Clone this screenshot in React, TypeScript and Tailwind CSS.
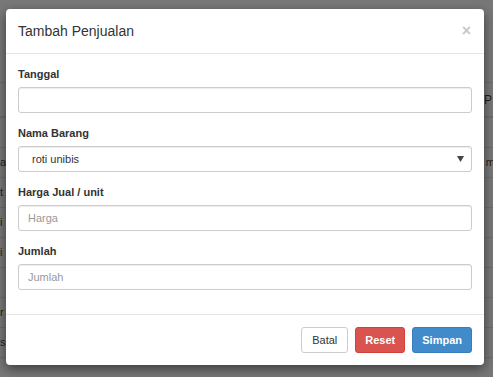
import React from 'react';

const rows = [
  { left: '', right: '' },
  { left: 'a', right: 'm' },
  { left: 't', right: '' },
  { left: 'i', right: '' },
  { left: 'i', right: '' },
  { left: '', right: '' },
  { left: 'r', right: '' },
  { left: 's', right: '' },
];

function Field({ label, children }: { label: string; children: React.ReactNode }) {
  return (
    <div className="mb-3">
      <label className="block h-4 mb-[5px] text-[11px] leading-4 font-bold text-[#333]">{label}</label>
      {children}
    </div>
  );
}

const inputCls =
  'w-full h-[26px] px-[9px] text-[11px] text-[#555] bg-white border border-[#ccc] rounded-[3px] shadow-[inset_0_1px_1px_rgba(0,0,0,0.075)] outline-none placeholder:text-[#999]';

export default function App() {
  return (
    <div className="relative w-[493px] h-[377px] overflow-hidden bg-[#787878]" style={{ fontFamily: '"Liberation Sans", Arial, sans-serif' }}>
      {/* page behind the backdrop */}
      <div className="pt-[82px] text-[11px] text-[#1e1e1e]">
        <div className="flex justify-between items-center h-[36px] border-t border-b-2 border-[#6c6c6c]">
          <span></span>
          <span className="pr-[1px] text-[12px]">P</span>
        </div>
        {rows.map((r, i) => (
          <div key={i} className="flex justify-between items-center h-[30px] border-b border-[#6c6c6c]">
            <span>{r.left}</span>
            <span className="-mr-[2px]">{r.right}</span>
          </div>
        ))}
      </div>

      {/* modal */}
      <div className="absolute left-[6px] top-[9px] w-[478px] bg-white rounded-[4px] shadow-[0_4px_12px_rgba(0,0,0,0.5)]">
        <div className="flex items-center justify-between px-3 py-3 border-b border-[#e5e5e5]">
          <h4 className="text-[14px] leading-5 text-[#333]">Tambah Penjualan</h4>
          <span className="text-[16px] leading-4 font-bold text-[#c8c8c8] mr-[1px]">×</span>
        </div>
        <div className="p-3">
          <Field label="Tanggal">
            <input className={inputCls} />
          </Field>
          <Field label="Nama Barang">
            <div className={`${inputCls} flex items-center justify-between pl-[13px] pr-[7px]`}>
              <span className="text-[#333]">roti unibis</span>
              <svg width="7" height="6" viewBox="0 0 7 6"><path d="M0 0H7L3.5 6Z" fill="#444" /></svg>
            </div>
          </Field>
          <Field label="Harga Jual / unit">
            <input className={inputCls} placeholder="Harga" />
          </Field>
          <Field label="Jumlah">
            <input className={inputCls} placeholder="Jumlah" />
          </Field>
        </div>
        <div className="flex justify-end gap-[7px] p-3 border-t border-[#e5e5e5]">
          <button className="h-[26px] px-[10px] text-[11px] text-[#333] bg-white border border-[#ccc] rounded-[3px]">Batal</button>
          <button className="h-[26px] px-[9px] text-[11px] font-bold text-white bg-[#d9534f] border border-[#d43f3a] rounded-[3px]">Reset</button>
          <button className="h-[26px] px-[9px] text-[11px] font-bold text-white bg-[#428bca] border border-[#357ebd] rounded-[3px]">Simpan</button>
        </div>
      </div>
    </div>
  );
}
